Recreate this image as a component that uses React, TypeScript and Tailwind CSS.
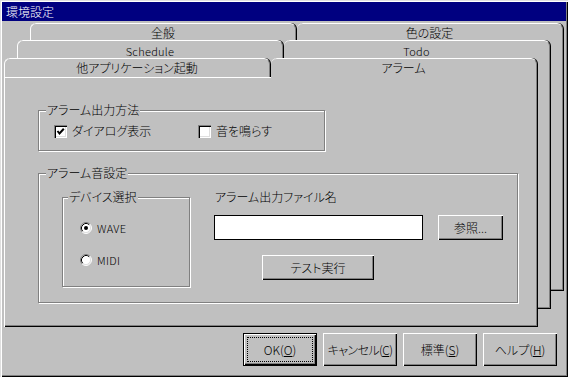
import type { ReactNode } from "react";

type TabSpec = { label: string; text: string };

const raised =
  "shadow-[inset_1px_1px_0_#fff,inset_-1px_-1px_0_#000,inset_-2px_-2px_0_#808080]";

function Page({
  tabs,
  rowClass,
  bodyClass,
  front,
  className,
  children,
}: {
  tabs: TabSpec[];
  rowClass: string;
  bodyClass: string;
  front?: boolean;
  className: string;
  children?: ReactNode;
}) {
  return (
    <div className={`col-start-1 row-start-1 flex w-[534px] flex-col ${className}`}>
      <div className={`flex items-start gap-px ${rowClass}`}>
        {tabs.map((t, i) => (
          <div
            key={t.label}
            className={`flex w-[266px] justify-center rounded-t-[6px] border-t border-r border-t-white border-r-[#808080] bg-[#c0c0c0] shadow-[1px_0_0_#000] ${
              i === 0 ? "border-l border-l-white" : ""
            } ${front && i === 1 ? "relative z-10 h-[20px]" : "h-full"} ${t.text}`}
          >
            {t.label}
          </div>
        ))}
      </div>
      <div
        className={`border-l border-white bg-[#c0c0c0] shadow-[inset_-1px_-1px_0_#000,inset_-2px_-2px_0_#808080] ${
          front ? "border-t" : ""
        } ${bodyClass}`}
      >
        {children}
      </div>
    </div>
  );
}

function Group({
  label,
  labelClass,
  className,
  children,
}: {
  label: string;
  labelClass: string;
  className: string;
  children?: ReactNode;
}) {
  return (
    <div
      className={`relative border border-[#808080] shadow-[inset_1px_1px_0_#fff,1px_1px_0_#fff] ${className}`}
    >
      <span className={`absolute top-[-8px] bg-[#c0c0c0] px-px leading-[14px] ${labelClass}`}>
        {label}
      </span>
      {children}
    </div>
  );
}

function Checkbox({ checked, label, className }: { checked?: boolean; label: string; className?: string }) {
  return (
    <div className={`flex items-center gap-[5px] ${className ?? ""}`}>
      <div className="flex h-[13px] w-[13px] items-center justify-center bg-white shadow-[inset_1px_1px_0_#808080,inset_2px_2px_0_#000,inset_-1px_-1px_0_#fff,inset_-2px_-2px_0_#dfdfdf]">
        {checked ? (
          <svg width="13" height="13" viewBox="0 0 13 13">
            <polyline points="3.5,6 5.5,8.5 9.8,3.8" fill="none" stroke="#000" strokeWidth="2" />
          </svg>
        ) : null}
      </div>
      <span>{label}</span>
    </div>
  );
}

function Radio({ checked, label }: { checked?: boolean; label: string }) {
  return (
    <div className="flex items-center gap-[5px]">
      <svg width="12" height="12" viewBox="0 0 12 12">
        <circle cx="6" cy="6" r="5" fill="#fff" />
        <path d="M2.11 9.89 A5.5 5.5 0 0 1 9.89 2.11" stroke="#808080" fill="none" />
        <path d="M9.89 2.11 A5.5 5.5 0 0 1 2.11 9.89" stroke="#fff" fill="none" />
        <path d="M2.82 9.18 A4.5 4.5 0 0 1 9.18 2.82" stroke="#000" fill="none" />
        <path d="M9.18 2.82 A4.5 4.5 0 0 1 2.82 9.18" stroke="#dfdfdf" fill="none" />
        {checked ? <circle cx="6" cy="6" r="2" fill="#000" /> : null}
      </svg>
      <span className="text-[11px] tracking-[0.3px]">{label}</span>
    </div>
  );
}

function Button({ children, className }: { children: ReactNode; className: string }) {
  return (
    <button
      type="button"
      className={`flex items-center justify-center whitespace-nowrap bg-[#c0c0c0] ${raised} ${className}`}
    >
      {children}
    </button>
  );
}

function Key({ children }: { children: string }) {
  return <span className="underline underline-offset-[1px]">{children}</span>;
}

export default function App() {
  return (
    <div className="h-[377px] w-[568px] bg-[#c0c0c0] p-[2px] font-['Noto_Sans_CJK_JP',sans-serif] text-[12px] leading-[14px] font-light text-black [font-feature-settings:'palt'] shadow-[inset_1px_1px_0_#dfdfdf,inset_2px_2px_0_#fff,inset_-1px_-1px_0_#000,inset_-2px_-2px_0_#808080]">
      <div className="flex h-[19px] items-center bg-[#000080] pl-[4px] text-white">環境設定</div>

      <div className="grid">
        <Page
          className="ml-[28px] mt-[2px]"
          rowClass="h-[17px]"
          bodyClass="h-[251px]"
          tabs={[
            { label: "全般", text: "pt-[2px]" },
            { label: "色の設定", text: "pt-[2px]" },
          ]}
        />
        <Page
          className="ml-[15px] mt-[19px]"
          rowClass="h-[18px]"
          bodyClass="h-[251px]"
          tabs={[
            { label: "Schedule", text: "pt-[3px] text-[11px] tracking-[0.3px]" },
            { label: "Todo", text: "pt-[3px] text-[11px] tracking-[0.3px]" },
          ]}
        />
        <Page
          front
          className="ml-[2px] mt-[37px]"
          rowClass="h-[19px]"
          bodyClass="h-[250px] pl-[33px] pt-[32px]"
          tabs={[
            { label: "他アプリケーション起動", text: "pt-[2px]" },
            { label: "アラーム", text: "pt-[2px]" },
          ]}
        >
          <Group label="アラーム出力方法" labelClass="left-[7px]" className="h-[41px] w-[287px]">
            <div className="flex items-center pl-[15px] pt-[13px]">
              <Checkbox checked label="ダイアログ表示" className="w-[144px]" />
              <Checkbox label="音を鳴らす" />
            </div>
          </Group>

          <Group label="アラーム音設定" labelClass="left-[7px]" className="mt-[22px] h-[130px] w-[480px]">
            <div className="flex items-start">
              <Group label="デバイス選択" labelClass="left-[5px]" className="ml-[23px] mt-[23px] h-[90px] w-[128px]">
                <div className="flex flex-col gap-[18px] pl-[17px] pt-[23px]">
                  <Radio checked label="WAVE" />
                  <Radio label="MIDI" />
                </div>
              </Group>

              <div className="ml-[24px] mt-[16px] flex flex-col">
                <div className="pl-px">アラーム出力ファイル名</div>
                <div className="mt-[11px] flex">
                  <div className="h-[25px] w-[209px] border border-black bg-white" />
                  <Button className="ml-[15px] h-[25px] w-[65px]">参照...</Button>
                </div>
                <Button className="ml-[48px] mt-[15px] h-[25px] w-[112px]">テスト実行</Button>
              </div>
            </div>
          </Group>
        </Page>
      </div>

      <div className="mt-[6px] flex justify-end gap-[6px] pr-[9px]">
        <button
          type="button"
          className="flex h-[33px] w-[74px] border border-black bg-[#c0c0c0] p-[3px] shadow-[inset_1px_1px_0_#fff,inset_-1px_-1px_0_#000,inset_-2px_-2px_0_#808080]"
        >
          <span className="flex h-full w-full items-center justify-center border border-dotted border-black">
            OK(<Key>O</Key>)
          </span>
        </button>
        <Button className="h-[33px] w-[74px] tracking-[-0.6px]">
          キャンセル(<Key>C</Key>)
        </Button>
        <Button className="h-[33px] w-[74px]">
          標準(<Key>S</Key>)
        </Button>
        <Button className="h-[33px] w-[74px]">
          ヘルプ(<Key>H</Key>)
        </Button>
      </div>
    </div>
  );
}
